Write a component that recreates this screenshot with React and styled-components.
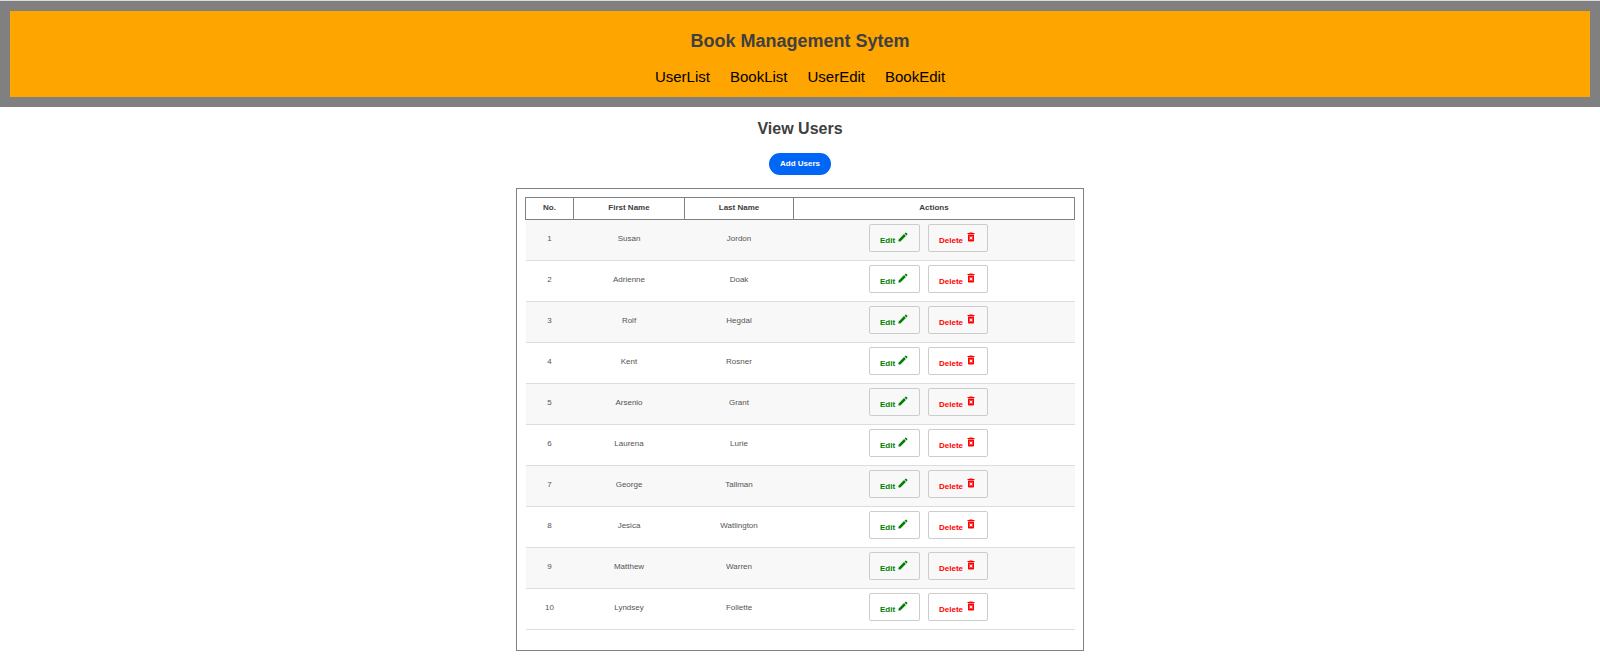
import React from "react";
import styled, { createGlobalStyle } from "styled-components";
import { MdEdit, MdDeleteForever } from "react-icons/md";

const GlobalStyle = createGlobalStyle`
  * { box-sizing: border-box; }
  body {
    margin: 0;
    background: #fff;
    color: #404040;
    font-family: "Liberation Sans", Arial, sans-serif;
  }
`;

const Header = styled.header`
  border-top: 1px solid #dcdcdc;
  background: gray;
  padding: 10px;
`;

const Banner = styled.div`
  display: flex;
  flex-direction: column;
  align-items: center;
  gap: 17px;
  padding: 20px 10px 11px;
  background: orange;
`;

const Title = styled.h1`
  margin: 0;
  font-size: 18px;
  line-height: 20px;
`;

const Nav = styled.nav`
  display: flex;
  gap: 20px;
`;

const NavLink = styled.a`
  color: #000;
  font-size: 15px;
  line-height: 18px;
  text-decoration: none;
`;

const Main = styled.main`
  display: flex;
  flex-direction: column;
  align-items: center;
  padding: 12px 16px 20px;
`;

const Heading = styled.h2`
  margin: 0 0 15px;
  font-size: 16px;
  line-height: 19px;
`;

const AddButton = styled.button`
  margin-bottom: 13px;
  padding: 6px 11px;
  border: 0;
  border-radius: 11px;
  background: #0066f5;
  color: #fff;
  font: bold 8px/10px "Liberation Sans", Arial, sans-serif;
  cursor: pointer;
`;

const Card = styled.section`
  width: 100%;
  max-width: 568px;
  padding: 8px 8px 20px;
  border: 1px solid gray;
`;

const Table = styled.table`
  width: 100%;
  border-collapse: collapse;
  table-layout: fixed;
  font-size: 8px;
  line-height: 10px;
  text-align: center;
`;

const Column = styled.col`
  width: ${(p) => p.$width};
`;

const HeadCell = styled.th`
  padding: 5px 4px 6px;
  border: 1px solid gray;
`;

const Row = styled.tr`
  border-bottom: 1px solid #ddd;
  &:nth-child(odd) { background: #f8f8f8; }
`;

const Cell = styled.td`
  padding: 6px 4px 8px;
  color: #555;
`;

const ActionCell = styled(Cell)`
  padding-top: 4px;
`;

const Actions = styled.div`
  display: flex;
  justify-content: center;
  gap: 8px;
  padding-right: 11px;
`;

const ActionButton = styled.button`
  display: flex;
  gap: 2px;
  height: 28px;
  padding: 6px 10px;
  border: 1px solid #ccc;
  border-radius: 2px;
  background: transparent;
  color: ${(p) => p.$color};
  font: bold 8px/10px "Liberation Sans", Arial, sans-serif;
  cursor: pointer;

  span { padding-top: 5px; }
  svg { width: 12px; height: 12px; }
`;

const links = ["UserList", "BookList", "UserEdit", "BookEdit"];

const users = [
  ["Susan", "Jordon"],
  ["Adrienne", "Doak"],
  ["Rolf", "Hegdal"],
  ["Kent", "Rosner"],
  ["Arsenio", "Grant"],
  ["Laurena", "Lurie"],
  ["George", "Tallman"],
  ["Jesica", "Watlington"],
  ["Matthew", "Warren"],
  ["Lyndsey", "Follette"],
];

export default function App() {
  return (
    <>
      <GlobalStyle />
      <Header>
        <Banner>
          <Title>Book Management Sytem</Title>
          <Nav>
            {links.map((link) => (
              <NavLink key={link} href={`#${link}`}>{link}</NavLink>
            ))}
          </Nav>
        </Banner>
      </Header>
      <Main>
        <Heading>View Users</Heading>
        <AddButton type="button">Add Users</AddButton>
        <Card>
          <Table>
            <colgroup>
              <Column $width="48px" />
              <Column $width="111px" />
              <Column $width="109px" />
              <Column $width="auto" />
            </colgroup>
            <thead>
              <tr>
                <HeadCell scope="col">No.</HeadCell>
                <HeadCell scope="col">First Name</HeadCell>
                <HeadCell scope="col">Last Name</HeadCell>
                <HeadCell scope="col">Actions</HeadCell>
              </tr>
            </thead>
            <tbody>
              {users.map(([first, last], i) => (
                <Row key={first}>
                  <Cell>{i + 1}</Cell>
                  <Cell>{first}</Cell>
                  <Cell>{last}</Cell>
                  <ActionCell>
                    <Actions>
                      <ActionButton type="button" $color="green">
                        <span>Edit</span>
                        <MdEdit aria-hidden="true" />
                      </ActionButton>
                      <ActionButton type="button" $color="red">
                        <span>Delete</span>
                        <MdDeleteForever aria-hidden="true" />
                      </ActionButton>
                    </Actions>
                  </ActionCell>
                </Row>
              ))}
            </tbody>
          </Table>
        </Card>
      </Main>
    </>
  );
}
